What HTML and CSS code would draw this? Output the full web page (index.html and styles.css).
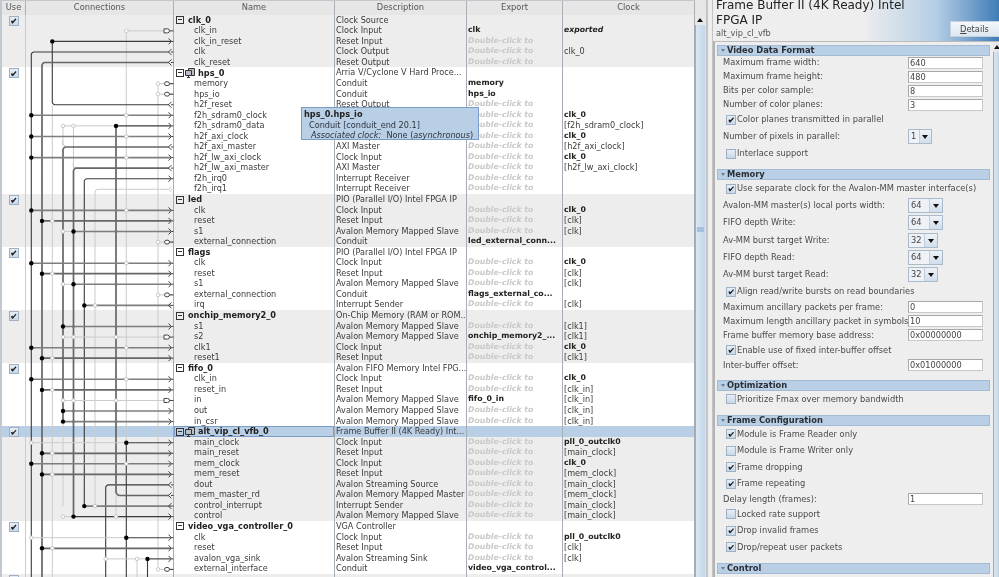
FILE: index.html
```html
<!DOCTYPE html>
<html lang="en">
<head>
<meta charset="utf-8">
<title>Platform Designer - Frame Buffer II</title>
<link rel="stylesheet" href="styles.css">
</head>
<body>
<div class="app">
<section class="left">
<div class="table">
<div class="thead"><div>Use</div><div>Connections</div><div>Name</div><div>Description</div><div>Export</div><div>Clock</div></div>
<div class="tbody">
<div class="row gray"><div class="use"><i class="cb on"></i></div><div></div><div class="name grp"><i class="exp"></i>clk_0</div><div>Clock Source</div><div></div><div></div></div>
<div class="row gray"><div></div><div></div><div class="name">clk_in</div><div>Clock Input</div><div class="x">clk</div><div class="ex">exported</div></div>
<div class="row gray"><div></div><div></div><div class="name">clk_in_reset</div><div>Reset Input</div><div class="d">Double-click to</div><div></div></div>
<div class="row gray"><div></div><div></div><div class="name">clk</div><div>Clock Output</div><div class="d">Double-click to</div><div>clk_0</div></div>
<div class="row gray"><div></div><div></div><div class="name">clk_reset</div><div>Reset Output</div><div class="d">Double-click to</div><div></div></div>
<div class="row"><div class="use"><i class="cb on"></i></div><div></div><div class="name grp"><i class="exp"></i><svg class="chip" viewBox="0 0 10 10"><path d="M3.5 .5h6v7h-6z"/><path d="M.5 2.500h6v5h-6zM2 9.500h3M3.500 7.500v2"/></svg>hps_0</div><div>Arria V/Cyclone V Hard Proce...</div><div></div><div></div></div>
<div class="row"><div></div><div></div><div class="name">memory</div><div>Conduit</div><div class="x">memory</div><div></div></div>
<div class="row"><div></div><div></div><div class="name">hps_io</div><div>Conduit</div><div class="x">hps_io</div><div></div></div>
<div class="row"><div></div><div></div><div class="name">h2f_reset</div><div>Reset Output</div><div class="d">Double-click to</div><div></div></div>
<div class="row"><div></div><div></div><div class="name">f2h_sdram0_clock</div><div>Clock Input</div><div class="d">Double-click to</div><div class="x">clk_0</div></div>
<div class="row"><div></div><div></div><div class="name">f2h_sdram0_data</div><div>AXI Slave</div><div class="d">Double-click to</div><div>[f2h_sdram0_clock]</div></div>
<div class="row"><div></div><div></div><div class="name">h2f_axi_clock</div><div>Clock Input</div><div class="d">Double-click to</div><div class="x">clk_0</div></div>
<div class="row"><div></div><div></div><div class="name">h2f_axi_master</div><div>AXI Master</div><div class="d">Double-click to</div><div>[h2f_axi_clock]</div></div>
<div class="row"><div></div><div></div><div class="name">h2f_lw_axi_clock</div><div>Clock Input</div><div class="d">Double-click to</div><div class="x">clk_0</div></div>
<div class="row"><div></div><div></div><div class="name">h2f_lw_axi_master</div><div>AXI Master</div><div class="d">Double-click to</div><div>[h2f_lw_axi_clock]</div></div>
<div class="row"><div></div><div></div><div class="name">f2h_irq0</div><div>Interrupt Receiver</div><div class="d">Double-click to</div><div></div></div>
<div class="row"><div></div><div></div><div class="name">f2h_irq1</div><div>Interrupt Receiver</div><div class="d">Double-click to</div><div></div></div>
<div class="row gray"><div class="use"><i class="cb on"></i></div><div></div><div class="name grp"><i class="exp"></i>led</div><div>PIO (Parallel I/O) Intel FPGA IP</div><div></div><div></div></div>
<div class="row gray"><div></div><div></div><div class="name">clk</div><div>Clock Input</div><div class="d">Double-click to</div><div class="x">clk_0</div></div>
<div class="row gray"><div></div><div></div><div class="name">reset</div><div>Reset Input</div><div class="d">Double-click to</div><div>[clk]</div></div>
<div class="row gray"><div></div><div></div><div class="name">s1</div><div>Avalon Memory Mapped Slave</div><div class="d">Double-click to</div><div>[clk]</div></div>
<div class="row gray"><div></div><div></div><div class="name">external_connection</div><div>Conduit</div><div class="x">led_external_conn...</div><div></div></div>
<div class="row"><div class="use"><i class="cb on"></i></div><div></div><div class="name grp"><i class="exp"></i>flags</div><div>PIO (Parallel I/O) Intel FPGA IP</div><div></div><div></div></div>
<div class="row"><div></div><div></div><div class="name">clk</div><div>Clock Input</div><div class="d">Double-click to</div><div class="x">clk_0</div></div>
<div class="row"><div></div><div></div><div class="name">reset</div><div>Reset Input</div><div class="d">Double-click to</div><div>[clk]</div></div>
<div class="row"><div></div><div></div><div class="name">s1</div><div>Avalon Memory Mapped Slave</div><div class="d">Double-click to</div><div>[clk]</div></div>
<div class="row"><div></div><div></div><div class="name">external_connection</div><div>Conduit</div><div class="x">flags_external_co...</div><div></div></div>
<div class="row"><div></div><div></div><div class="name">irq</div><div>Interrupt Sender</div><div class="d">Double-click to</div><div>[clk]</div></div>
<div class="row gray"><div class="use"><i class="cb on"></i></div><div></div><div class="name grp"><i class="exp"></i>onchip_memory2_0</div><div>On-Chip Memory (RAM or ROM...</div><div></div><div></div></div>
<div class="row gray"><div></div><div></div><div class="name">s1</div><div>Avalon Memory Mapped Slave</div><div class="d">Double-click to</div><div>[clk1]</div></div>
<div class="row gray"><div></div><div></div><div class="name">s2</div><div>Avalon Memory Mapped Slave</div><div class="x">onchip_memory2_...</div><div>[clk1]</div></div>
<div class="row gray"><div></div><div></div><div class="name">clk1</div><div>Clock Input</div><div class="d">Double-click to</div><div class="x">clk_0</div></div>
<div class="row gray"><div></div><div></div><div class="name">reset1</div><div>Reset Input</div><div class="d">Double-click to</div><div>[clk1]</div></div>
<div class="row"><div class="use"><i class="cb on"></i></div><div></div><div class="name grp"><i class="exp"></i>fifo_0</div><div>Avalon FIFO Memory Intel FPG...</div><div></div><div></div></div>
<div class="row"><div></div><div></div><div class="name">clk_in</div><div>Clock Input</div><div class="d">Double-click to</div><div class="x">clk_0</div></div>
<div class="row"><div></div><div></div><div class="name">reset_in</div><div>Reset Input</div><div class="d">Double-click to</div><div>[clk_in]</div></div>
<div class="row"><div></div><div></div><div class="name">in</div><div>Avalon Memory Mapped Slave</div><div class="x">fifo_0_in</div><div>[clk_in]</div></div>
<div class="row"><div></div><div></div><div class="name">out</div><div>Avalon Memory Mapped Slave</div><div class="d">Double-click to</div><div>[clk_in]</div></div>
<div class="row"><div></div><div></div><div class="name">in_csr</div><div>Avalon Memory Mapped Slave</div><div class="d">Double-click to</div><div>[clk_in]</div></div>
<div class="row sel"><div class="use"><i class="cb on"></i></div><div></div><div class="name grp focus"><i class="exp"></i><svg class="chip" viewBox="0 0 10 10"><path d="M3.500 .5h6v7h-6z"/><path d="M.5 2.500h6v5h-6zM2 9.500h3M3.500 7.500v2"/></svg>alt_vip_cl_vfb_0</div><div>Frame Buffer II (4K Ready) Int...</div><div></div><div></div></div>
<div class="row gray"><div></div><div></div><div class="name">main_clock</div><div>Clock Input</div><div class="d">Double-click to</div><div class="x">pll_0_outclk0</div></div>
<div class="row gray"><div></div><div></div><div class="name">main_reset</div><div>Reset Input</div><div class="d">Double-click to</div><div>[main_clock]</div></div>
<div class="row gray"><div></div><div></div><div class="name">mem_clock</div><div>Clock Input</div><div class="d">Double-click to</div><div class="x">clk_0</div></div>
<div class="row gray"><div></div><div></div><div class="name">mem_reset</div><div>Reset Input</div><div class="d">Double-click to</div><div>[mem_clock]</div></div>
<div class="row gray"><div></div><div></div><div class="name">dout</div><div>Avalon Streaming Source</div><div class="d">Double-click to</div><div>[main_clock]</div></div>
<div class="row gray"><div></div><div></div><div class="name">mem_master_rd</div><div>Avalon Memory Mapped Master</div><div class="d">Double-click to</div><div>[mem_clock]</div></div>
<div class="row gray"><div></div><div></div><div class="name">control_interrupt</div><div>Interrupt Sender</div><div class="d">Double-click to</div><div>[main_clock]</div></div>
<div class="row gray"><div></div><div></div><div class="name">control</div><div>Avalon Memory Mapped Slave</div><div class="d">Double-click to</div><div>[main_clock]</div></div>
<div class="row"><div class="use"><i class="cb on"></i></div><div></div><div class="name grp"><i class="exp"></i>video_vga_controller_0</div><div>VGA Controller</div><div></div><div></div></div>
<div class="row"><div></div><div></div><div class="name">clk</div><div>Clock Input</div><div class="d">Double-click to</div><div class="x">pll_0_outclk0</div></div>
<div class="row"><div></div><div></div><div class="name">reset</div><div>Reset Input</div><div class="d">Double-click to</div><div>[clk]</div></div>
<div class="row"><div></div><div></div><div class="name">avalon_vga_sink</div><div>Avalon Streaming Sink</div><div class="d">Double-click to</div><div>[clk]</div></div>
<div class="row"><div></div><div></div><div class="name">external_interface</div><div>Conduit</div><div class="x">video_vga_control...</div><div></div></div>
<div class="row gray"><div class="use"><i class="cb on"></i></div><div></div><div></div><div></div><div></div><div></div></div>

<svg class="wires" viewBox="0 14.720 694 563" aria-hidden="true">
<defs>
<path id="ar" d="M168.500-3l3 3-3 3M171.500 0h2"/>
<path id="al" d="M171.500-3l-3 3 3 3M171 0h2.500"/>
<g id="clk"><path class="m" d="M31.300 0H171"/><use href="#ar" class="t"/><circle class="r" cx="126.300" r="1.800"/><circle class="b" cx="31.300" r="2.200"/></g>
<g id="rst"><path class="t" d="M42 0H171"/><use href="#ar" class="t"/><circle class="r" cx="52.300" r="1.800"/><circle class="b" cx="42" r="2.200"/></g>
<g id="sl"><path class="l" d="M63 0H73.500"/><path class="m" d="M73.500 0H171"/><use href="#ar" class="t"/><circle class="r" cx="63" r="1.800"/><circle class="g" cx="116" r="1.500"/><circle class="b" cx="73.500" r="2.200"/></g>
<g id="ma"><path class="m" d="M63 0H171"/><use href="#ar" class="t"/><circle class="g" cx="73.500" r="1.500"/><circle class="g" cx="116" r="1.500"/><circle class="b" cx="63" r="2.200"/></g>
<g id="li"><path class="l" d="M63 0H164"/><circle class="r" cx="63" r="1.800"/><circle class="r" cx="73.500" r="1.800"/><circle class="r" cx="116" r="1.800"/><path class="box" d="M164 -2h3.500a2 2 0 0 1 0 4H164zM169.500 0h4"/></g>
<g id="co"><path class="l" d="M158 0H164"/><circle class="r" cx="158" r="1.800"/><ellipse class="box" cx="167" rx="2.500" ry="2"/><path class="t1" d="M169.500 0h4"/></g>
<g id="iq"><path class="m" d="M84.300 0H171"/><use href="#al" class="t"/><circle class="r" cx="95" r="1.800"/><circle class="b" cx="84.300" r="2.200"/></g>
<g id="vc"><path class="l" d="M31.300 0H126.300"/><path class="t1" d="M126.300 0H171"/><use href="#ar" class="t"/><circle class="r" cx="31.300" r="1.800"/><circle class="b" cx="126.300" r="2.200"/></g>
</defs>

<path class="l" d="M52.300 106V577M63 125.600V146M73.500 125.600V167M95 505.800V192a3 3 0 0 1 3-3H168M126.300 30.600V442.400M158 83.400V569.100M63 421.300V505.800M73.500 125.600V168M116 495.200V516.300M137 558.600V577"/>
<path class="l" d="M52.300 106a3 3 0 0 1 3-2M63 140a4 4 0 0 0 3 6M73.500 162a4 4 0 0 0 3 5.800"/>
<path class="t1" d="M31.300 577V55a3 3 0 0 1 3-3.300H169M84.300 505.800V182a3 3 0 0 1 3-3.600H171M105.700 577V488a3 3 0 0 1 3-3.400H169M126.300 442.400V577M147.500 558.600V577M52.300 41V101a3 3 0 0 0 3 3.500H169"/>
<path class="t" d="M42 577V65.500a3 3 0 0 1 3-3.300H169M63 421.300V150a3 3 0 0 1 3-3.300H169M73.500 516.300V171a3 3 0 0 1 3-3.200H169M116 125.600V491a4 4 0 0 0 4 4.200H169"/>

<path class="l" d="M126.300 30.600H164"/><circle class="r" cx="126.300" cy="30.600" r="1.800"/><path class="box" d="M164 28.600h3.500a2 2 0 0 1 0 4H164zM169.500 30.600h4"/>
<path class="t1" d="M52.300 41.100H171"/><use href="#ar" y="41.100" class="t"/><circle class="b" cx="52.300" cy="41.100" r="2.200"/>
<use href="#al" y="51.700" class="t"/><use href="#al" y="62.200" class="t"/>
<use href="#co" y="83.400"/><use href="#co" y="93.900"/>
<use href="#al" y="104.500" class="t"/>
<use href="#clk" y="115"/>
<path class="l" d="M63 125.600H116"/><path class="t1" d="M116 125.600H171"/><use href="#ar" y="125.600" class="t"/><circle class="r" cx="63" cy="125.600" r="1.800"/><circle class="r" cx="73.500" cy="125.600" r="1.800"/><circle class="b" cx="116" cy="125.600" r="2.200"/>
<use href="#clk" y="136.200"/>
<use href="#al" y="146.700" class="t"/>
<use href="#clk" y="157.300"/>
<use href="#al" y="167.800" class="t"/>
<use href="#ar" y="178.400" class="t"/>
<use href="#al" y="189" class="l"/>
<use href="#clk" y="210.100"/><use href="#rst" y="220.600"/><use href="#sl" y="231.200"/><use href="#co" y="241.800"/>
<use href="#clk" y="262.900"/><use href="#rst" y="273.400"/><use href="#sl" y="284"/><use href="#co" y="294.600"/><use href="#iq" y="305.100"/>
<use href="#ma" y="326.200"/><use href="#li" y="336.800"/><use href="#clk" y="347.400"/><use href="#rst" y="357.900"/>
<use href="#clk" y="379"/><use href="#rst" y="389.600"/><use href="#li" y="400.200"/><use href="#ma" y="410.700"/><use href="#ma" y="421.300"/>
<use href="#vc" y="442.400"/><use href="#rst" y="453"/><use href="#clk" y="463.500"/><use href="#rst" y="474.100"/>
<use href="#al" y="484.600" class="t"/><use href="#al" y="495.200" class="t"/>
<use href="#iq" y="505.800"/>
<path class="l" d="M63 516.300H73.500"/><path class="t1" d="M73.500 516.300H171"/><use href="#ar" y="516.300" class="t"/><circle class="r" cx="63" cy="516.300" r="1.800"/><circle class="r" cx="116" cy="516.300" r="1.800"/><circle class="b" cx="73.500" cy="516.300" r="2.200"/>
<use href="#vc" y="537.400"/><use href="#rst" y="548"/>
<path class="l" d="M105.700 558.600H147.500"/><path class="t1" d="M147.500 558.600H171"/><use href="#ar" y="558.600" class="t"/><circle class="r" cx="105.700" cy="558.600" r="1.800"/><circle class="r" cx="137" cy="558.600" r="1.800"/><circle class="b" cx="147.500" cy="558.600" r="2.200"/>
<use href="#co" y="569.100"/>
</svg>

<div class="tip">
<div class="tip-t">hps_0.hps_io</div>
<div class="tip-a">Conduit [conduit_end 20.1]</div>
<div class="tip-b"><em>Associated clock:</em>&nbsp; None (<em>asynchronous</em>)</div>
</div>
</div>
</div>
<div class="vscroll"><div class="up"></div><div class="track"><i class="grip"></i></div></div>
<div class="split"></div>
</section>

<section class="right">
<header class="title">
<h1>Frame Buffer II (4K Ready) Intel FPGA IP</h1>
<div class="sub">alt_vip_cl_vfb</div>
<button class="details"><u>D</u>etails</button>
</header>
<div class="panel">
<div class="form">
<h2 class="sec first">Video Data Format</h2>
<div class="field"><label>Maximum frame width:</label><span class="inp">640</span></div>
<div class="field"><label>Maximum frame height:</label><span class="inp">480</span></div>
<div class="field"><label>Bits per color sample:</label><span class="inp">8</span></div>
<div class="field"><label>Number of color planes:</label><span class="inp">3</span></div>
<div class="check"><i class="cb on"></i>Color planes transmitted in parallel</div>
<div class="cfield"><label>Number of pixels in parallel:</label><span class="combo w1"><b>1</b><i></i></span></div>
<div class="check"><i class="cb"></i>Interlace support</div>
<h2 class="sec">Memory</h2>
<div class="check"><i class="cb on"></i>Use separate clock for the Avalon-MM master interface(s)</div>
<div class="cfield"><label>Avalon-MM master(s) local ports width:</label><span class="combo w64"><b>64</b><i></i></span></div>
<div class="cfield"><label>FIFO depth Write:</label><span class="combo w64"><b>64</b><i></i></span></div>
<div class="cfield"><label>Av-MM burst target Write:</label><span class="combo w32"><b>32</b><i></i></span></div>
<div class="cfield"><label>FIFO depth Read:</label><span class="combo w64"><b>64</b><i></i></span></div>
<div class="cfield"><label>Av-MM burst target Read:</label><span class="combo w32"><b>32</b><i></i></span></div>
<div class="check"><i class="cb on"></i>Align read/write bursts on read boundaries</div>
<div class="field"><label>Maximum ancillary packets per frame:</label><span class="inp">0</span></div>
<div class="field"><label>Maximum length ancillary packet in symbols:</label><span class="inp">10</span></div>
<div class="field"><label>Frame buffer memory base address:</label><span class="inp">0x00000000</span></div>
<div class="check"><i class="cb on"></i>Enable use of fixed inter-buffer offset</div>
<div class="field"><label>Inter-buffer offset:</label><span class="inp">0x01000000</span></div>
<h2 class="sec">Optimization</h2>
<div class="check"><i class="cb"></i>Prioritize Fmax over memory bandwidth</div>
<h2 class="sec">Frame Configuration</h2>
<div class="check"><i class="cb on"></i>Module is Frame Reader only</div>
<div class="check"><i class="cb"></i>Module is Frame Writer only</div>
<div class="check"><i class="cb on"></i>Frame dropping</div>
<div class="check"><i class="cb on"></i>Frame repeating</div>
<div class="field"><label>Delay length (frames):</label><span class="inp">1</span></div>
<div class="check"><i class="cb"></i>Locked rate support</div>
<div class="check"><i class="cb on"></i>Drop invalid frames</div>
<div class="check"><i class="cb on"></i>Drop/repeat user packets</div>
<h2 class="sec">Control</h2>
</div>
<div class="rscroll"><div class="up"></div><div class="track"></div></div>
</div>
</section>
</div>
</body>
</html>
```

FILE: styles.css
```css
* { box-sizing: border-box; }
html, body { margin: 0; height: 577px; overflow: hidden; background: #eee; }
body { font: 8.150px/10.56px "DejaVu Sans", sans-serif; color: #3a3a3a; filter: blur(.3px); }
.app { display: flex; width: 999px; height: 577px; }

/* left: system contents table */
.left { display: flex; width: 713px; flex: none; }
.table { width: 695px; flex: none; display: flex; flex-direction: column; }
.thead { height: 14.72px; flex: none; display: grid; grid-template-columns: 26px 148px 161px 132px 96px 132px; background: #e6e6e6; border-top: 1px solid #c4c8cc; font-size: 8.3px; line-height: 13px; color: #555; text-align: center; }
.thead > div { border-right: 1px solid #aab0b6; }
.thead > div:first-child { border-left: 2px solid #c2c8d0; }
.tbody { position: relative; flex: 1; overflow: hidden; }
.row { height: 10.56px; display: grid; grid-template-columns: 26px 148px 161px 132px 96px 132px; background: #fff; white-space: nowrap; }
.row.gray { background: #ededed; }
.row.sel { background: #b8cfe5; }
.row > div { border-right: 1px solid #a6adb5; padding-left: 1px; overflow: hidden; }
.row > div:first-child { border-left: 2px solid #c2c8d0; border-right-color: #c8ccd0; }
.use { display: flex; justify-content: center; padding-top: 1px; padding-left: 0 !important; overflow: visible !important; }
.row > .name { padding-left: 20px; }
.row > .name.grp { padding-left: 2px; font-weight: 700; font-size: 8.2px; display: flex; align-items: center; color: #222; }
.row > .name.focus { box-shadow: inset 0 0 0 1px #7a9cc6; }
.x { font-weight: 700; font-size: 7.8px; color: #222; }
.d { font-weight: 700; font-style: italic; font-size: 7.75px; color: #c9c9c9; }
.ex { font-weight: 700; font-style: italic; font-size: 7.7px; color: #222; }
.exp { width: 8px; height: 8px; border: 1px solid #333; margin-right: 4px; flex: none; position: relative; }
.exp::after { content: ""; position: absolute; left: 1px; right: 1px; top: 2px; height: 1px; background: #333; }
.chip { width: 10px; height: 10px; margin: 0 3px 0 -3px; flex: none; fill: #b9bfc6; stroke: #333; stroke-width: 1; }

.cb { display: inline-block; width: 10px; height: 10px; flex: none; border: 1px solid #9fb0c2; background: linear-gradient(#e6edf5, #c9d8e8); position: relative; }
.cb.on::after { content: ""; position: absolute; inset: 1px; background: #222; clip-path: polygon(5% 55%, 30% 45%, 40% 60%, 85% 10%, 100% 25%, 40% 95%, 25% 95%); }

/* connection wires */
.wires { position: absolute; left: 0; top: 0; width: 694px; height: 563px; fill: none; pointer-events: none; }
.wires .l { stroke: #cbcbcb; stroke-width: 1; fill: none; }
.wires .m { stroke: #7e7e7e; stroke-width: 1.6; fill: none; }
.wires .t { stroke: #666; stroke-width: 1.700; fill: none; }
.wires .t1 { stroke: #3a3a3a; stroke-width: 1.100; fill: none; }
.wires use.t { stroke-width: 1; stroke: #444; }
.wires .b { fill: #000; stroke: none; }
.wires .r { fill: #fff; stroke: #bdbdbd; stroke-width: .8; }
.wires .g { fill: #777; stroke: none; }
.wires .box { fill: #fff; stroke: #444; stroke-width: 1; }

/* tooltip */
.tip { position: absolute; left: 301px; top: 92.500px; width: 178px; height: 33px; background: #b8cfe5; border: 1px solid #7a9cc6; padding: 1px 0 0 2px; line-height: 10.500px; color: #2c3440; white-space: nowrap; }
.tip-t { font-weight: 700; font-size: 8.200px; color: #222; }
.tip-a { padding-left: 5px; }
.tip-b { padding-left: 7px; }

/* table scrollbar and splitter */
.vscroll { width: 11px; flex: none; padding-top: 15px; display: flex; flex-direction: column; background: #e6e6e6; }
.up { height: 10px; flex: none; background: #e8e8e8; position: relative; }
.up::after { content: ""; position: absolute; left: 2px; top: 3px; border: 3px solid transparent; border-top: 0; border-bottom: 4px solid #111; }
.track { flex: 1; background: linear-gradient(90deg, #d9e6f2, #c3d7ea); border-left: 1px solid #8eaedb; border-right: 1px solid #dde; position: relative; }
.grip { position: absolute; left: 1px; right: 1px; top: 202px; height: 5px; background: #a5bfe0; }
.split { width: 7px; flex: none; border-left: 2px solid #c4c4c4; border-right: 1px solid #c4c4c4; background: #eee; }

/* right: parameters */
.right { flex: 1; min-width: 0; display: flex; flex-direction: column; }
.title { height: 41px; flex: none; position: relative; padding: 0 0 0 3px; background: linear-gradient(90deg, #eee 52%, #b5cee5 78%, #3f7db8); overflow: hidden; }
.title h1 { margin: -2px 0 0; width: 200px; font: 400 12px/15px "DejaVu Sans", sans-serif; color: #222; }
.sub { line-height: 11px; color: #555; font-size: 8.200px; }
.details { position: absolute; left: 237px; top: 21px; width: 60px; height: 16px; padding: 0 11px 0 0; border: 1px solid #c6d2de; background: linear-gradient(#f5f8fb, #dde7f0); font: 8.300px "DejaVu Sans", sans-serif; color: #444; }
.panel { flex: 1; display: flex; min-height: 0; border-top: 1px solid #bbb; border-left: 2px solid #b4b4b4; background: #eee; }
.form { flex: 1; min-width: 0; padding: 0 3px 0 2px; font-size: 8.300px; }
.rscroll { width: 6px; flex: none; display: flex; flex-direction: column; }
.rscroll .up { overflow: hidden; }
.rscroll .up::after { left: 1px; }
.rscroll .track { border-left-color: #8eaedb; border-right: 0; }

.sec { height: 11px; margin: 7.500px 0 0; padding-left: 9px; background: #b8cfe5; border: 1px solid #a3bbd3; font: 700 8.300px/9px "DejaVu Sans", sans-serif; color: #2a2f36; position: relative; }
.sec::before { content: ""; position: absolute; left: 3px; top: 3px; border: 2.500px solid transparent; border-top: 3px solid #6e7f90; border-bottom: 0; }
.sec.first { margin-top: 2.500px; }
.field, .cfield { display: flex; align-items: center; padding-left: 6px; color: #4a4a4a; }
.field { height: 14px; }
.cfield { height: 17.300px; }
.check { height: 16.500px; display: flex; align-items: center; gap: 1px; padding-left: 9px; color: #4a4a4a; white-space: nowrap; }
.field label, .cfield label { width: 185px; flex: none; white-space: nowrap; }
.inp { width: 75px; height: 12px; background: #fff; border: 1px solid #c8c8c8; border-top-color: #a8a8a8; border-left-color: #a8a8a8; padding-left: 1px; line-height: 11px; font-size: 8.200px; color: #444; }
.combo { display: flex; height: 15px; border: 1px solid #a9bacb; background: #d9e4ef; }
.combo b { font-weight: 400; background: #eef2f6; padding-left: 2px; line-height: 13px; border-right: 1px solid #c2cede; color: #444; }
.combo i { width: 12px; position: relative; background: linear-gradient(#eef3f8, #d0deeb); }
.combo i::after { content: ""; position: absolute; left: 2.500px; top: 5px; border: 3.500px solid transparent; border-top: 4px solid #111; border-bottom: 0; }
.w64 { width: 35px; } .w64 b { width: 22px; }
.w32 { width: 30px; } .w32 b { width: 17px; }
.w1 { width: 24px; } .w1 b { width: 11px; }
```
